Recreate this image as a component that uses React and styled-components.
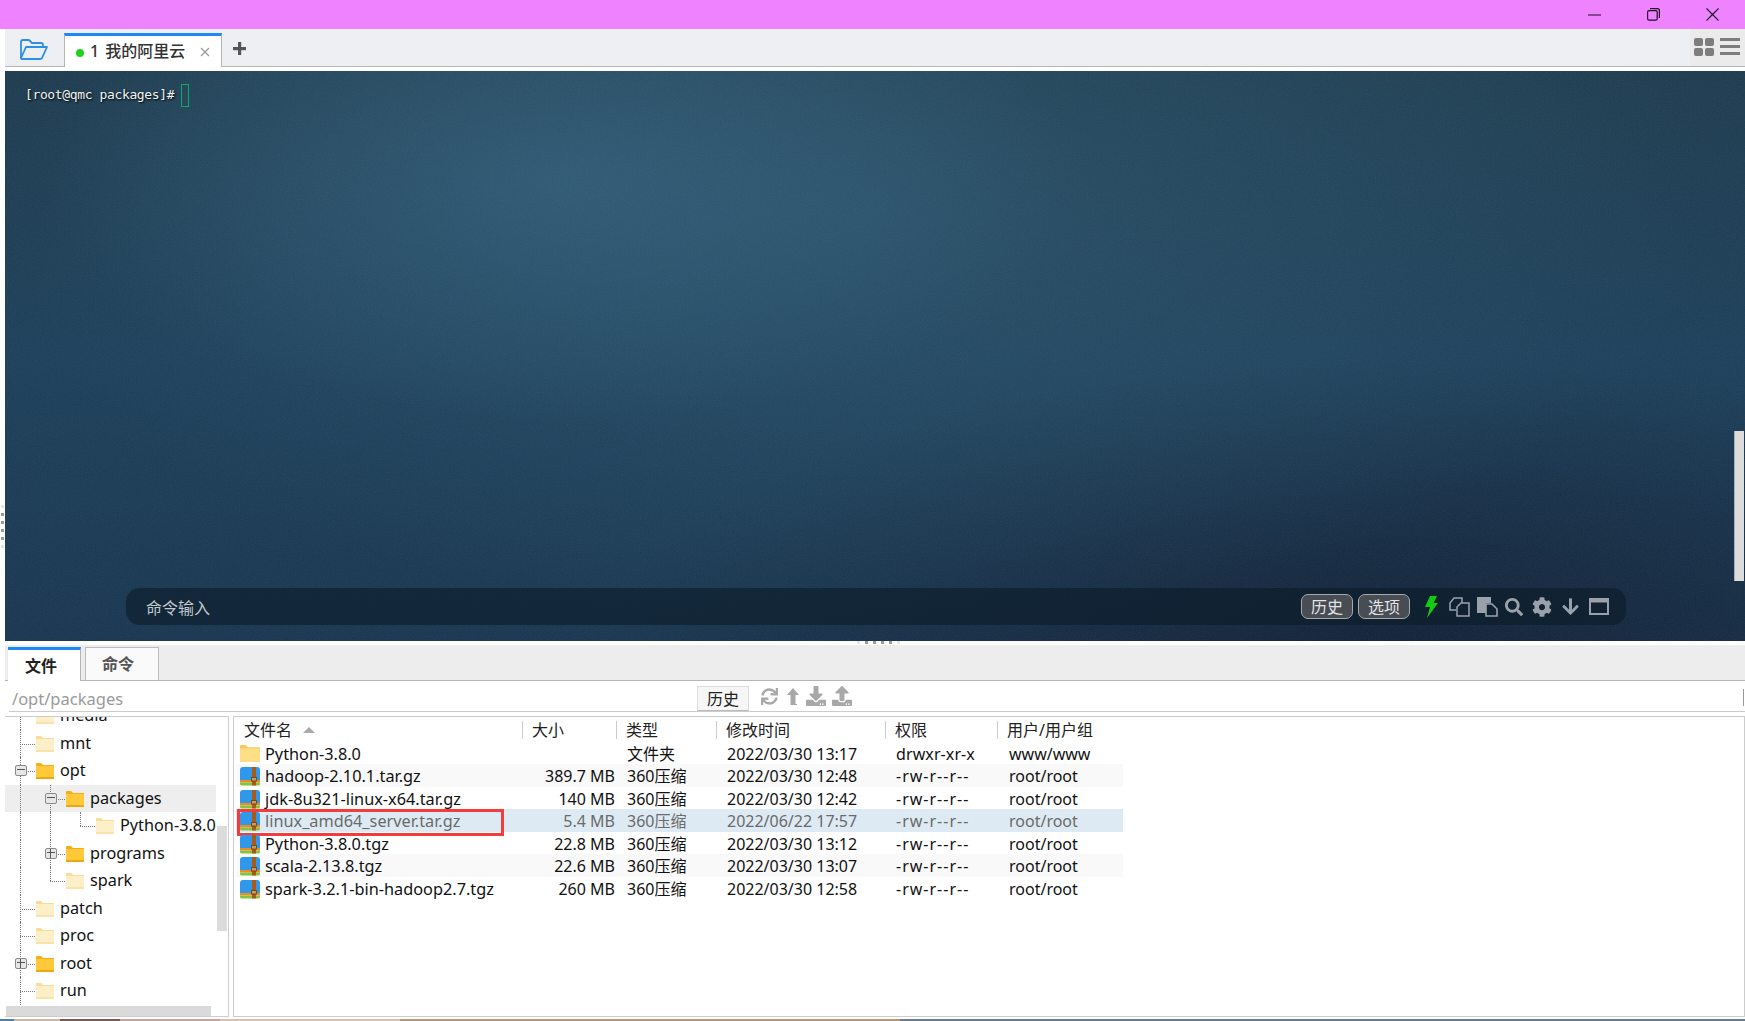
import React from 'react';
import styled, { createGlobalStyle } from 'styled-components';
import { FaCog, FaSearch, FaArrowDown, FaSync, FaDownload, FaUpload } from 'react-icons/fa';

const UI_FONT = `"Noto Sans", "Noto Sans CJK SC", sans-serif`;

const GlobalStyle = createGlobalStyle`
  html, body {
    margin: 0;
    padding: 0;
    background: #fff;
    overflow: hidden;
  }
  * { box-sizing: border-box; }
`;

const Page = styled.div`
  width: 1745px;
  height: 1021px;
  display: flex;
  flex-direction: column;
  font-family: ${UI_FONT};
  font-size: 16px;
  color: #1a1a1a;
  overflow: hidden;
`;

const TitleBar = styled.div`
  height: 29px;
  flex: none;
  background: #ee82ff;
  display: flex;
  justify-content: flex-end;
  padding-right: 3px;
`;

const WinButton = styled.div`
  width: 59px;
  display: flex;
  align-items: center;
  justify-content: center;
  color: #1a1020;
`;

const TabBar = styled.div`
  height: 38px;
  flex: none;
  margin-left: 5px;
  background: #eeeff2;
  border-bottom: 1px solid #b5b5b5;
  display: flex;
  align-items: flex-end;
`;

const OpenButton = styled.div`
  width: 59px;
  height: 37px;
  display: flex;
  align-items: center;
  padding-left: 15px;
  padding-top: 4px;
`;

const SessionTab = styled.div`
  width: 158px;
  height: 34px;
  margin-bottom: -1px;
  background: #fff;
  border-top: 3px solid #1e88f5;
  border-left: 1px solid #b5b5b5;
  border-right: 1px solid #b5b5b5;
  display: flex;
  align-items: center;
  padding-left: 11px;
`;

const Dot = styled.span`
  width: 8px;
  height: 8px;
  border-radius: 50%;
  background: #1fd01f;
  margin-right: 6px;
  margin-top: 3px;
`;

const TabLabel = styled.span`
  font-size: 16px;
  line-height: 20px;
  color: #333;
  font-weight: 500;
  white-space: pre;
  word-spacing: 2px;
  position: relative;
  top: -1px;
`;

const TabClose = styled.span`
  margin-left: 15px;
  width: 11px;
  display: flex;
  margin-top: 1px;
`;

const PlusButton = styled.div`
  margin-left: 11px;
  height: 37px;
  padding-top: 2px;
  display: flex;
  align-items: center;
`;

const BarRight = styled.div`
  margin-left: auto;
  width: 55px;
  height: 37px;
  background: #ebebeb;
  display: flex;
  align-items: center;
  gap: 6px;
  padding: 0 0 2px 4px;
`;

const Terminal = styled.div`
  position: relative;
  flex: 1;
  margin: 4px 0 0 5px;
  padding: 12px 20px 16px;
  display: flex;
  flex-direction: column;
  overflow: hidden;
  background:
    radial-gradient(ellipse 520px 240px at 560px 110px, rgba(56, 104, 134, 0.55), rgba(56, 104, 134, 0) 100%),
    radial-gradient(ellipse 850px 420px at 850px 140px, rgba(46, 90, 114, 0.6), rgba(46, 90, 114, 0) 100%),
    radial-gradient(ellipse 300px 90px at 1500px 60px, rgba(30, 62, 82, 0.4), rgba(30, 62, 82, 0) 100%),
    radial-gradient(ellipse 800px 280px at 1400px 570px, rgba(14, 26, 46, 0.7), rgba(14, 26, 46, 0) 100%),
    linear-gradient(180deg, #1d3b4f 0%, #1c3f5a 50%, #183550 100%);
`;

const Noise = styled.svg`
  position: absolute;
  inset: 0;
  width: 100%;
  height: 100%;
  opacity: 0.08;
  pointer-events: none;
`;

const Prompt = styled.div`
  position: relative;
  display: flex;
  align-items: center;
  font-family: "DejaVu Sans Mono", monospace;
  font-size: 13px;
  letter-spacing: -0.37px;
  line-height: 24px;
  color: #eef2f4;
  text-shadow: 1px 1px 2px #000;
`;

const Cursor = styled.span`
  width: 8px;
  height: 23px;
  margin-left: 7px;
  border: 1px solid #12a868;
`;

const CommandBar = styled.div`
  position: relative;
  margin: auto 0 0 101px;
  width: 1500px;
  height: 37px;
  flex: none;
  border-radius: 14px;
  background: rgba(12, 28, 40, 0.62);
  display: flex;
  align-items: center;
  padding: 0 17px 0 20px;
`;

const CommandLabel = styled.span`
  font-size: 16px;
  color: #c3c9cd;
  margin-top: 1px;
`;

const BarTools = styled.div`
  margin-left: auto;
  display: flex;
  align-items: center;
  color: #9aa1aa;
`;

const PillButton = styled.div`
  width: 52px;
  height: 25px;
  margin-right: 5px;
  border: 1px solid #a6a9ac;
  border-radius: 7px;
  background: #484c53;
  color: #e2e4e6;
  font-size: 16px;
  line-height: 24px;
  text-align: center;
`;

const ToolIcon = styled.span`
  display: flex;
  align-items: center;
  justify-content: center;
  width: ${p => p.$w}px;
  margin-left: ${p => p.$ml || 0}px;
`;

const ScrollThumb = styled.div`
  position: absolute;
  right: 1px;
  top: 360px;
  width: 10px;
  height: 150px;
  background: #dcdcdc;
  border-left: 1px solid #a9b0b5;
`;

const GripColumn = styled.div`
  position: absolute;
  left: 1px;
  top: 505px;
  display: flex;
  flex-direction: column;
  gap: 5px;
`;

const GripRow = styled.div`
  position: absolute;
  left: 857px;
  top: 641px;
  display: flex;
  gap: 5px;
`;

const GripDot = styled.span`
  width: 3px;
  height: 3px;
  background: ${p => (p.$faint ? '#e4e4e4' : '#9a9a9a')};
`;

const LowerTabs = styled.div`
  height: 36px;
  flex: none;
  margin: 4px 0 0 5px;
  background: #ededed;
  border-bottom: 1px solid #b5b5b5;
  display: flex;
  align-items: flex-end;
  padding-left: 3px;
  gap: 4px;
`;

const LowerTab = styled.div`
  width: ${p => (p.$active ? 73 : 74)}px;
  height: ${p => (p.$active ? 34 : 33)}px;
  margin-bottom: ${p => (p.$active ? -1 : 0)}px;
  background: ${p => (p.$active ? '#fff' : '#fafafa')};
  border-top: ${p => (p.$active ? '3px solid #1e88f5' : '1px solid #bbb')};
  border-left: ${p => (p.$active ? 'none' : '1px solid #bbb')};
  border-right: ${p => (p.$active ? '1px solid #b5b5b5' : '1px solid #bbb')};
  font-size: 16px;
  font-weight: 700;
  color: ${p => (p.$active ? '#222' : '#555')};
  display: flex;
  align-items: center;
  justify-content: center;
  padding-right: ${p => (p.$active ? 6 : 8)}px;
  padding-bottom: 2px;
`;

const PathRow = styled.div`
  height: 31px;
  flex: none;
  margin-left: 9px;
  border-bottom: 1px solid #ccc;
  display: flex;
  align-items: center;
  position: relative;
`;

const PathText = styled.span`
  width: 688px;
  padding-left: 3px;
  padding-top: 5px;
  font-size: 16.5px;
  color: #9a9a9a;
`;

const HistoryButton = styled.div`
  width: 52px;
  height: 25px;
  margin-top: 5px;
  background: #f6f6f6;
  border: 1px solid #ddd;
  border-bottom-color: #bbb;
  font-size: 16px;
  line-height: 24px;
  text-align: center;
  color: #222;
`;

const PathTools = styled.div`
  display: flex;
  align-items: center;
  margin-left: 11px;
  color: #a8a8a8;
`;

const PathEnd = styled.span`
  position: absolute;
  right: 1px;
  top: 8px;
  height: 17px;
  border-left: 1px solid #999;
`;

const Panels = styled.div`
  height: 301px;
  flex: none;
  margin: 4px 0 0 5px;
  display: flex;
  gap: 4px;
`;

const TreePanel = styled.div`
  position: relative;
  width: 224px;
  flex: none;
  border: 1px solid #ccc;
  border-left: none;
  overflow: hidden;
`;

const TreeList = styled.div`
  margin-top: -14.6px;
`;

const TreeRowBox = styled.div`
  width: 211px;
  height: 27.5px;
  display: flex;
  align-items: center;
  background: ${p => (p.$selected ? '#eeeeee' : 'transparent')};
  white-space: nowrap;
`;

const GuideCell = styled.div`
  position: relative;
  width: 30px;
  height: 100%;
  flex: none;
  &::before {
    content: '';
    display: ${p => (p.$line ? 'block' : 'none')};
    position: absolute;
    left: 15px;
    top: 0;
    height: ${p => (p.$line === 'last' ? '50%' : '100%')};
    border-left: 1px dotted #777;
  }
  &::after {
    content: '';
    display: ${p => (p.$branch ? 'block' : 'none')};
    position: absolute;
    left: 15px;
    top: 50%;
    width: 15px;
    border-top: 1px dotted #777;
  }
`;

const Expander = styled.span`
  position: absolute;
  z-index: 1;
  left: 10px;
  top: 8px;
  width: 12px;
  height: 11px;
  border-radius: 2px;
  border: 1.5px solid #8a8a8a;
  background: #e6e6e6;
  &::before {
    content: '';
    position: absolute;
    left: 1px;
    right: 1px;
    top: 3px;
    border-top: 1px solid #555;
  }
  &::after {
    content: '';
    display: ${p => (p.$plus ? 'block' : 'none')};
    position: absolute;
    top: 0;
    bottom: 0;
    left: 3.5px;
    border-left: 1px solid #555;
  }
`;

const TreeName = styled.span`
  margin-left: 6px;
  font-size: 16.25px;
  color: #111;
  position: relative;
  top: -1px;
`;

const TreeFolder = styled.svg`
  flex: none;
  margin-left: 1px;
`;

const TreeThumbV = styled.div`
  position: absolute;
  right: 1px;
  top: 109px;
  width: 10px;
  height: 105px;
  background: #dcdcdc;
`;

const TreeThumbH = styled.div`
  position: absolute;
  left: 1px;
  bottom: 0;
  width: 205px;
  height: 10px;
  background: #dadada;
`;

const ListPanel = styled.div`
  position: relative;
  flex: 1;
  border: 1px solid #ccc;
  padding-left: 2px;
  overflow: hidden;
`;

const COLUMNS = '286px 94px 100px 169px 112px 126px';

const HeaderRow = styled.div`
  display: grid;
  grid-template-columns: ${COLUMNS};
  width: 887px;
  height: 24.5px;
  align-items: center;
  padding-top: 1px;
`;

const HeaderCell = styled.div`
  height: 18px;
  line-height: 18px;
  font-size: 16px;
  color: #222;
  padding-left: ${p => (p.$first ? 8 : 9)}px;
  border-left: ${p => (p.$first ? 'none' : '1px solid #ccc')};
  display: flex;
  align-items: center;
`;

const SortArrow = styled.span`
  margin-left: 11px;
  width: 0;
  height: 0;
  border-left: 6px solid transparent;
  border-right: 6px solid transparent;
  border-bottom: 6px solid #aaa;
`;

const FileRow = styled.div`
  display: grid;
  grid-template-columns: ${COLUMNS};
  width: 887px;
  height: 22.6px;
  align-items: center;
  font-size: 16px;
  color: ${p => (p.$selected ? '#6a6a6a' : '#111')};
  background: ${p => (p.$selected ? '#deeaf3' : p.$striped ? '#f9f9f9' : '#fff')};
  white-space: nowrap;
`;

const NameCell = styled.div`
  display: flex;
  align-items: center;
  padding-left: 4px;
  position: relative;
  height: 100%;
`;

const NameText = styled.span`
  margin-left: 5px;
  font-size: 16.3px;
`;

const Marker = styled.div`
  position: absolute;
  left: 1px;
  top: 0;
  width: 267px;
  height: 27px;
  border: 3px solid #f53c3c;
  pointer-events: none;
`;

const SizeCell = styled.div`
  text-align: right;
  padding-right: 1px;
`;

const TextCell = styled.div`
  padding-left: ${p => p.$pad}px;
  letter-spacing: ${p => p.$spacing || 0}px;
`;

const TypeCell = styled(TextCell)`
  position: relative;
  top: -1px;
`;

const BottomStrip = styled.div`
  margin-top: 2px;
  height: 2px;
  flex: none;
  background: linear-gradient(90deg, #4a7fa8 0 14px, #c9b8a8 14px 60px, #7b5a55 60px 120px, #c8a49c 120px 220px, #d6c0b0 220px 400px, #b89878 400px 900px, #6a7d92 900px 1745px);
`;

const treeRows = [
  { name: 'media', cells: [{ line: 'full', branch: true }] },
  { name: 'mnt', cells: [{ line: 'full', branch: true }] },
  { name: 'opt', open: true, cells: [{ line: 'full', branch: true, exp: 'minus' }] },
  { name: 'packages', open: true, selected: true, cells: [{ line: 'full' }, { line: 'full', branch: true, exp: 'minus' }] },
  { name: 'Python-3.8.0', cells: [{ line: 'full' }, { line: 'full' }, { line: 'last', branch: true }] },
  { name: 'programs', open: true, cells: [{ line: 'full' }, { line: 'full', branch: true, exp: 'plus' }] },
  { name: 'spark', cells: [{ line: 'full' }, { line: 'last', branch: true }] },
  { name: 'patch', cells: [{ line: 'full', branch: true }] },
  { name: 'proc', cells: [{ line: 'full', branch: true }] },
  { name: 'root', open: true, cells: [{ line: 'full', branch: true, exp: 'plus' }] },
  { name: 'run', cells: [{ line: 'full', branch: true }] },
];

const files = [
  { name: 'Python-3.8.0', folder: true, size: '', type: '文件夹', time: '2022/03/30 13:17', perm: 'drwxr-xr-x', user: 'www/www' },
  { name: 'hadoop-2.10.1.tar.gz', size: '389.7 MB', type: '360压缩', time: '2022/03/30 12:48', perm: '-rw-r--r--', user: 'root/root' },
  { name: 'jdk-8u321-linux-x64.tar.gz', size: '140 MB', type: '360压缩', time: '2022/03/30 12:42', perm: '-rw-r--r--', user: 'root/root' },
  { name: 'linux_amd64_server.tar.gz', size: '5.4 MB', type: '360压缩', time: '2022/06/22 17:57', perm: '-rw-r--r--', user: 'root/root', selected: true },
  { name: 'Python-3.8.0.tgz', size: '22.8 MB', type: '360压缩', time: '2022/03/30 13:12', perm: '-rw-r--r--', user: 'root/root' },
  { name: 'scala-2.13.8.tgz', size: '22.6 MB', type: '360压缩', time: '2022/03/30 13:07', perm: '-rw-r--r--', user: 'root/root' },
  { name: 'spark-3.2.1-bin-hadoop2.7.tgz', size: '260 MB', type: '360压缩', time: '2022/03/30 12:58', perm: '-rw-r--r--', user: 'root/root' },
];

const FolderIcon = ({ open }) => (
  <TreeFolder width="18" height="16" viewBox="0 0 18 16">
    <path d="M0 1 Q0 0 1 0 H5 L7 2 H18 V15 H0 Z" fill={open ? '#f5ae14' : '#fbdc95'} />
    <rect x="0" y="3" width="18" height="13" fill={open ? '#ffc93a' : '#fdf0c8'} />
    <rect x="0" y="14" width="18" height="2" fill={open ? '#eda70f' : '#f9e3a8'} />
  </TreeFolder>
);

const ArchiveIcon = () => (
  <svg width="20" height="20" viewBox="0 0 20 20" style={{ flex: 'none' }}>
    <path d="M0 4 Q0 1 3 1 H17 Q20 1 20 4 V14 H0 Z" fill="#2f98ea" />
    <rect x="0" y="14" width="20" height="2.5" fill="#ee8c22" />
    <path d="M0 16.5 H20 V18 Q20 19.5 18 19.5 H2 Q0 19.5 0 18 Z" fill="#86c440" />
    <rect x="12" y="1" width="4" height="18.5" fill="#a85a18" />
    <rect x="11.5" y="11.5" width="5" height="3.5" fill="#c99a5e" stroke="#6e3c10" strokeWidth="0.8" />
  </svg>
);

const PlainFolder = () => (
  <svg width="20" height="18" viewBox="0 0 18 16" style={{ flex: 'none' }}>
    <path d="M0 1 Q0 0 1 0 H5 L7 2 H18 V15 H0 Z" fill="#fac95c" />
    <rect x="0" y="3" width="18" height="12" fill="#ffdf85" />
  </svg>
);

function TreeRow({ row }) {
  return (
    <TreeRowBox $selected={row.selected}>
      {row.cells.map((c, i) => (
        <GuideCell key={i} $line={c.line} $branch={c.branch}>
          {c.exp && <Expander $plus={c.exp === 'plus'} />}
        </GuideCell>
      ))}
      <FolderIcon open={row.open} />
      <TreeName>{row.name}</TreeName>
    </TreeRowBox>
  );
}

export default function App() {
  return (
    <Page>
      <GlobalStyle />
      <TitleBar>
        <WinButton>
          <svg width="13" height="2"><rect width="13" height="1" y="0.5" x="0" fill="#1a1020" /></svg>
        </WinButton>
        <WinButton>
          <svg width="13" height="13" viewBox="0 0 13 13" fill="none" stroke="#1a1020" strokeWidth="1.2">
            <rect x="0.6" y="2.6" width="9.6" height="9.6" rx="1.5" />
            <path d="M3 .6 H10.5 Q12.4 .6 12.4 2.5 V10" />
          </svg>
        </WinButton>
        <WinButton>
          <svg width="13" height="13" viewBox="0 0 13 13" stroke="#1a1020" strokeWidth="1.1">
            <path d="M.5 .5 L12.5 12.5 M12.5 .5 L.5 12.5" />
          </svg>
        </WinButton>
      </TitleBar>

      <TabBar>
        <OpenButton>
          <svg width="28" height="21" viewBox="0 0 28 21" fill="none" stroke="#2a8fe6" strokeWidth="1.8" strokeLinejoin="round">
            <path d="M1 19 V3 Q1 1 3 1 H9 L12 4 H21 Q23 4 23 6 V8" />
            <path d="M1 19 L6 8 H27 L22 19 Q21.5 20 20 20 H2 Q1 20 1 19 Z" />
          </svg>
        </OpenButton>
        <SessionTab>
          <Dot />
          <TabLabel>1 我的阿里云</TabLabel>
          <TabClose>
            <svg width="10" height="10" viewBox="0 0 10 10" stroke="#999" strokeWidth="1.3">
              <path d="M1 1 L9 9 M9 1 L1 9" />
            </svg>
          </TabClose>
        </SessionTab>
        <PlusButton>
          <svg width="13" height="13" viewBox="0 0 13 13" fill="#555">
            <rect x="5" width="3.2" height="13" />
            <rect y="5" width="13" height="3.2" />
          </svg>
        </PlusButton>
        <BarRight>
          <svg width="20" height="18" viewBox="0 0 20 18" fill="#7d7d7d">
            <rect width="9" height="8" rx="2" />
            <rect x="11" width="9" height="8" rx="2" />
            <rect y="10" width="9" height="8" rx="2" />
            <rect x="11" y="10" width="9" height="8" rx="2" />
          </svg>
          <svg width="20" height="17" viewBox="0 0 20 17" fill="#7d7d7d">
            <rect width="20" height="3" />
            <rect y="7" width="20" height="3" />
            <rect y="14" width="20" height="3" />
          </svg>
        </BarRight>
      </TabBar>

      <Terminal>
        <Noise>
          <filter id="grain">
            <feTurbulence type="fractalNoise" baseFrequency="0.85" numOctaves="2" stitchTiles="stitch" />
            <feColorMatrix type="saturate" values="0" />
          </filter>
          <rect width="100%" height="100%" filter="url(#grain)" />
        </Noise>
        <Prompt>
          [root@qmc packages]#
          <Cursor />
        </Prompt>
        <CommandBar>
          <CommandLabel>命令输入</CommandLabel>
          <BarTools>
            <PillButton>历史</PillButton>
            <PillButton>选项</PillButton>
            <ToolIcon $w={13} $ml={10}>
              <svg width="13" height="22" viewBox="0 0 13 22" fill="#12cc12">
                <path d="M5 0 H12 L8.5 7 H13 L2 22 L5 11 H0 Z" />
              </svg>
            </ToolIcon>
            <ToolIcon $w={21} $ml={11}>
              <svg width="21" height="20" viewBox="0 0 21 20" fill="none" stroke="#9aa1aa" strokeWidth="1.5">
                <path d="M7 13 H1 V6 L5 1 H13 V6" />
                <path d="M8 19 V10 L12 6 H20 V19 Z" />
              </svg>
            </ToolIcon>
            <ToolIcon $w={21} $ml={7}>
              <svg width="21" height="20" viewBox="0 0 21 20">
                <path d="M0 0 H14 V6 H9 V16 H0 Z" fill="#9aa1aa" />
                <path d="M9 19 V7 H15 L20 12 V19 Z" fill="none" stroke="#9aa1aa" strokeWidth="1.6" />
              </svg>
            </ToolIcon>
            <ToolIcon $w={19} $ml={6}><FaSearch size={18} /></ToolIcon>
            <ToolIcon $w={20} $ml={9}><FaCog size={20} /></ToolIcon>
            <ToolIcon $w={19} $ml={9}><FaArrowDown size={19} /></ToolIcon>
            <ToolIcon $w={20} $ml={9}>
              <svg width="20" height="17" viewBox="0 0 20 17" fill="none" stroke="#9aa1aa">
                <rect x="1" y="1" width="18" height="15" strokeWidth="2" />
                <rect x="1" y="1.5" width="18" height="2.5" fill="#9aa1aa" strokeWidth="1" />
              </svg>
            </ToolIcon>
          </BarTools>
        </CommandBar>
        <ScrollThumb />
      </Terminal>

      <GripColumn>
        <GripDot $faint /><GripDot /><GripDot /><GripDot /><GripDot /><GripDot $faint />
      </GripColumn>
      <GripRow>
        <GripDot $faint /><GripDot /><GripDot /><GripDot /><GripDot /><GripDot $faint />
      </GripRow>

      <LowerTabs>
        <LowerTab $active>文件</LowerTab>
        <LowerTab>命令</LowerTab>
      </LowerTabs>

      <PathRow>
        <PathText>/opt/packages</PathText>
        <HistoryButton>历史</HistoryButton>
        <PathTools>
          <ToolIcon $w={18}><FaSync size={17} /></ToolIcon>
          <ToolIcon $w={14} $ml={8}>
            <svg width="12" height="17" viewBox="0 0 12 17" fill="#a8a8a8">
              <path d="M6 0 L12 7 H8.5 V16 H10 V17 H3.5 V7 H0 Z" />
            </svg>
          </ToolIcon>
          <ToolIcon $w={20} $ml={6}><FaDownload size={20} /></ToolIcon>
          <ToolIcon $w={20} $ml={6}><FaUpload size={20} /></ToolIcon>
        </PathTools>
        <PathEnd />
      </PathRow>

      <Panels>
        <TreePanel>
          <TreeList>
            {treeRows.map(row => <TreeRow key={row.name} row={row} />)}
          </TreeList>
          <TreeThumbV />
          <TreeThumbH />
        </TreePanel>

        <ListPanel>
          <HeaderRow>
            <HeaderCell $first>文件名<SortArrow /></HeaderCell>
            <HeaderCell>大小</HeaderCell>
            <HeaderCell>类型</HeaderCell>
            <HeaderCell>修改时间</HeaderCell>
            <HeaderCell>权限</HeaderCell>
            <HeaderCell>用户/用户组</HeaderCell>
          </HeaderRow>
          {files.map((f, i) => (
            <FileRow key={f.name} $striped={i % 2 === 1} $selected={f.selected}>
              <NameCell>
                {f.folder ? <PlainFolder /> : <ArchiveIcon />}
                <NameText>{f.name}</NameText>
                {f.selected && <Marker />}
              </NameCell>
              <SizeCell>{f.size}</SizeCell>
              <TypeCell $pad={11}>{f.type}</TypeCell>
              <TextCell $pad={11}>{f.time}</TextCell>
              <TextCell $pad={11} $spacing={f.folder ? 0.1 : 1}>{f.perm}</TextCell>
              <TextCell $pad={12}>{f.user}</TextCell>
            </FileRow>
          ))}
        </ListPanel>
      </Panels>
      <BottomStrip />
    </Page>
  );
}
